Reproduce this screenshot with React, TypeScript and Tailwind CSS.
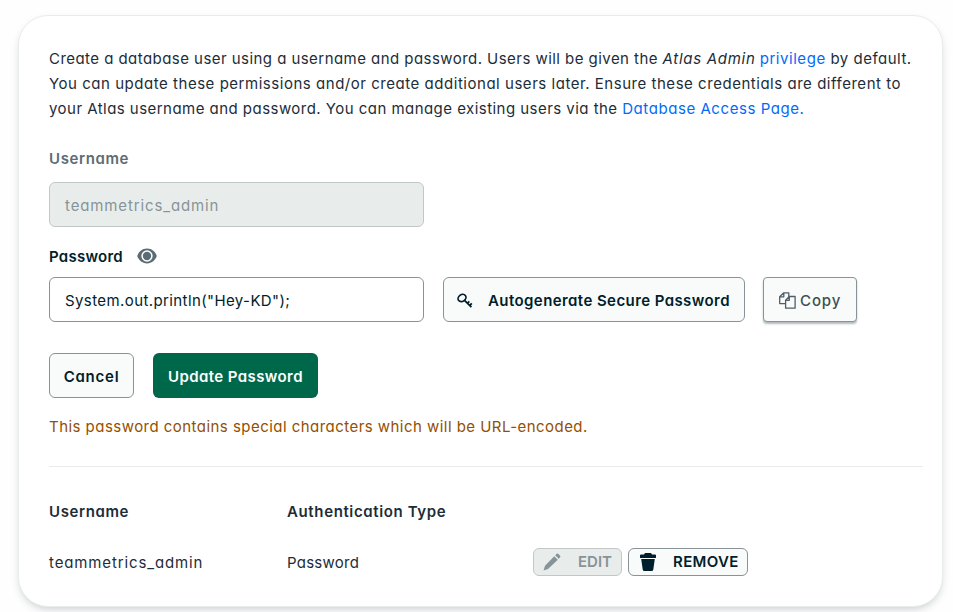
import React from "react";

function EyeIcon() {
  return (
    <svg width="20" height="16" viewBox="0 0 20 16" className="block">
      <path d="M10 .6C5 .6 1.600 4 .2 8 1.600 12 5 15.400 10 15.400S18.400 12 19.800 8C18.400 4 15 .6 10 .6Z" fill="#5c6c75" />
      <circle cx="10" cy="8" r="4.900" fill="#5c6c75" stroke="#fff" strokeWidth="1.500" />
    </svg>
  );
}

function KeyIcon() {
  return (
    <svg width="16" height="16" viewBox="0 0 16 16" fill="none" stroke="#001e2b" className="block">
      <ellipse cx="5" cy="5" rx="4.200" ry="3.400" transform="rotate(-38 5 5)" strokeWidth="1.700" />
      <path d="M7.500 7.300 14.400 14.200M12.700 12.500l2.100-2.100M10.400 10.300l1.900-1.900" strokeWidth="1.800" />
    </svg>
  );
}

function CopyIcon() {
  return (
    <svg width="17" height="17" viewBox="0 0 17 17" fill="#f9fbfa" stroke="#4f5f69" strokeWidth="1.300" strokeLinejoin="round" className="block">
      <path d="M4.800.8h5v10.800H.7V4.800ZM4.800.8v4H.7" />
      <path d="M10.300 4.500h5.800v11.700H6.600V8.300ZM10.300 4.500v3.800H6.600" />
    </svg>
  );
}

function PencilIcon() {
  return (
    <svg width="18" height="18" viewBox="0 0 18 18" fill="#889397" className="block">
      <path d="m11.200 3.200 3.600 3.600L5 16 .5 17.500 2 12.700Z" />
      <path d="m12.200 2.300 1.500-1.500q.7-.7 1.400 0l2 2q.7.700 0 1.400l-1.400 1.500Z" />
    </svg>
  );
}

function TrashIcon() {
  return (
    <svg width="16" height="18" viewBox="0 0 16 18" fill="#001e2b" className="block">
      <path d="M5 0h6l1 1.500h3q1 0 1 1V5H0V2.500q0-1 1-1h3Z" />
      <path d="M1.200 6h13.600l-1.500 10.500q-.2 1.500-1.700 1.500H4.400q-1.500 0-1.700-1.500Z" />
    </svg>
  );
}

export default function App() {
  return (
    <div className="h-[612px] w-[953px] overflow-hidden bg-[#fefefe] pt-[15px] pl-[18px] font-['Inter','Liberation_Sans',sans-serif] text-[15px] text-[#1c2d38] [font-feature-settings:'cv11']">
      <main className="flex h-[592px] w-[925px] flex-col rounded-[30px] border border-[#e8edeb] bg-white pt-[30px] pl-[30px] whitespace-nowrap shadow-[0_4px_10px_-3px_rgba(0,30,43,0.26)]">
        <p className="leading-[25px]">
          <span className="tracking-[0.45px]">Create a database user using a username and password. Users will be given the </span>
          <em className="tracking-[0.7px]">Atlas Admin</em> <a className="tracking-[0.55px] text-[#016bf8]">privilege</a>
          <span className="tracking-[0.5px]"> by default.</span>
          <br />
          <span className="tracking-[0.53px]">You can update these permissions and/or create additional users later. Ensure these credentials are different to</span>
          <br />
          <span className="tracking-[0.46px]">your Atlas username and password. You can manage existing users via the </span>
          <a className="tracking-[0.56px] text-[#016bf8]">Database Access Page.</a>
        </p>
        <label className="mt-[25px] h-[25px] leading-[25px] font-semibold tracking-[0.6px] text-[#5c6c75]">Username</label>
        <div className="mt-[11px] flex h-[45px] w-[375px] items-center rounded-md border border-[#c1c7c6] bg-[#e8edeb] pt-[3px] pl-[15px] tracking-[0.87px] text-[#889397]">teammetrics_admin</div>
        <div className="mt-[17px] flex h-[25px] items-center">
          <span className="w-[88px] pt-0.5 font-semibold tracking-[0.25px] text-[#001e2b]">Password</span>
          <span className="pb-0.5">
            <EyeIcon />
          </span>
        </div>
        <div className="mt-2 flex h-[45px] items-stretch">
          <div className="flex w-[375px] items-center rounded-md border border-[#889397] bg-white pt-[3px] pl-[15px] tracking-[0.4px] text-[#001e2b]">System.out.println("Hey-KD");</div>
          <button className="ml-[19px] flex w-[302px] items-center rounded-md border border-[#889397] bg-[#f9fbfa] pt-0.5 pl-[13px] font-semibold tracking-[0.42px] text-[#001e2b]">
            <KeyIcon />
            <span className="ml-[15px] pt-0.5">Autogenerate Secure Password</span>
          </button>
          <button className="ml-[18px] flex w-[94px] items-center rounded border border-[#889397] bg-[#f9fbfa] pt-px pl-[15px] font-medium tracking-[0.9px] text-[#3d4f58] shadow-[0_2px_2px_rgba(0,30,43,0.3)]">
            <CopyIcon />
            <span className="ml-1 pt-[3px]">Copy</span>
          </button>
        </div>
        <div className="mt-[31px] flex h-[45px] gap-[19px] font-semibold">
          <button className="w-[85px] rounded-md border border-[#889397] bg-[#f9fbfa] pt-[3px] tracking-[0.75px] text-[#001e2b]">Cancel</button>
          <button className="w-[165px] rounded-md bg-[#00684a] pt-[3px] tracking-[0.4px] text-white">Update Password</button>
        </div>
        <p className="mt-4 h-[25px] leading-[25px] tracking-[0.46px] text-[#944f01]">This password contains special characters which will be URL-encoded.</p>
        <hr className="mt-[27px] w-[874px] border-[#e8edeb]" />
        <div className="mt-8 flex h-[25px] items-center pt-0.5 font-semibold">
          <span className="w-[238px] tracking-[0.6px]">Username</span>
          <span className="tracking-[0.63px]">Authentication Type</span>
        </div>
        <div className="mt-6 flex h-7 items-center">
          <span className="w-[238px] pt-0.5 tracking-[0.87px]">teammetrics_admin</span>
          <span className="w-[246px] pt-0.5 tracking-[0.25px]">Password</span>
          <button className="flex h-7 w-[89px] items-center rounded-md border border-[#c1c7c6] bg-[#e8edeb] pl-[9px] font-semibold text-[#889397]">
            <PencilIcon />
            <span className="ml-[17px]">EDIT</span>
          </button>
          <button className="ml-1.5 flex h-7 w-[120px] items-center rounded-md border border-[#889397] bg-[#f9fbfa] pl-[11px] font-semibold tracking-[0.35px] text-[#001e2b]">
            <TrashIcon />
            <span className="ml-[17px]">REMOVE</span>
          </button>
        </div>
      </main>
    </div>
  );
}
